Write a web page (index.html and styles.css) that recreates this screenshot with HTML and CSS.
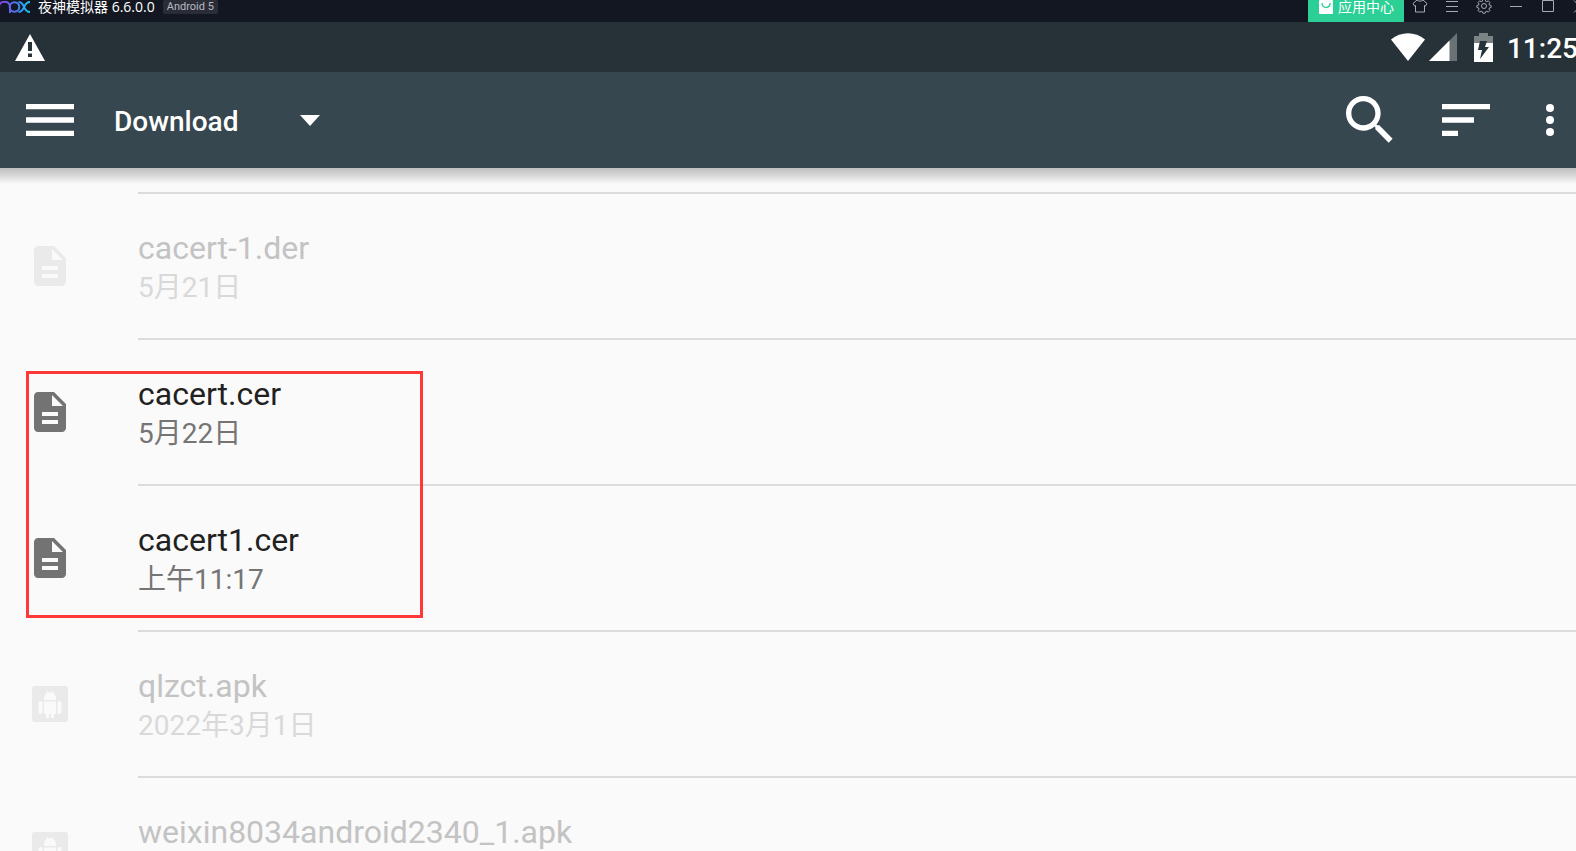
FILE: index.html
```html
<!DOCTYPE html>
<html lang="zh-CN">
<head>
<meta charset="utf-8">
<title>Download</title>
<link rel="stylesheet" href="styles.css">
</head>
<body>
<svg class="defs" aria-hidden="true">
  <symbol id="doc" viewBox="0 0 24 24"><path d="M14 2H6c-1.1 0-2 .9-2 2v16c0 1.100.9 2 2 2h12c1.100 0 2-.9 2-2V8l-6-6zm2 16H8v-2h8v2zm0-4H8v-2h8v2zm-3-5V3.500L18.500 9H13z"/></symbol>
  <symbol id="apk" viewBox="0 0 48 48"><path fill-rule="evenodd" d="M9 6h30a3 3 0 0 1 3 3v30a3 3 0 0 1-3 3H9a3 3 0 0 1-3-3V9a3 3 0 0 1 3-3zM18 20h12v-1c0-3-1-5-3-6l1-1.500-1-.5-1.200 1.500a8 8 0 0 0-3.600 0L21 11l-1 .5 1 1.500c-2 1-3 3-3 6zM18 21.500V34h2v3a1.500 1.500 0 0 0 3 0v-3h2v3a1.500 1.500 0 0 0 3 0v-3h2V21.500zM14.500 21a2 2 0 0 0-2 2v9a2 2 0 0 0 4 0v-9a2 2 0 0 0-2-2zM33.500 21a2 2 0 0 0-2 2v9a2 2 0 0 0 4 0v-9a2 2 0 0 0-2-2z"/></symbol>
</svg>

<header class="titlebar">
  <div class="brand">
    <svg class="logo" viewBox="0 0 30 12" aria-label="nox">
      <defs><linearGradient id="nox" gradientUnits="userSpaceOnUse" x1="0" y1="0" x2="30" y2="0"><stop offset="0" stop-color="#8a3ff0"/><stop offset=".55" stop-color="#4a7cf0"/><stop offset="1" stop-color="#12c8f0"/></linearGradient></defs>
      <g fill="none" stroke="url(#nox)" stroke-width="2"><path d="M-1 12V6C-1-1 10-1 10 6v6"/><circle cx="14.500" cy="6" r="4.800"/><path d="M18.500 1c7 0 4 10 11.500 10M18.500 11c7 0 4-10 11.500-10"/></g>
    </svg>
    <span class="app-name">夜神模拟器 6.6.0.0</span>
    <span class="version">Android 5</span>
  </div>
  <div class="window-tools">
    <button class="app-center">
      <svg viewBox="0 0 14 14" class="bag"><rect width="14" height="14" rx="1" fill="#fff"/><path d="M3 3c0 6 8 6 8 0" fill="none" stroke="#2ccf96" stroke-width="1.400"/></svg>
      应用中心
    </button>
    <button class="tool" aria-label="主题"><svg viewBox="0 0 16 16"><path d="M5 2L1 5.500 2.500 8l1-.5V14h9V7.500l1 .5L15 5.500 11 2C9.500 3.500 6.500 3.500 5 2z"/></svg></button>
    <button class="tool" aria-label="菜单"><svg viewBox="0 0 16 16"><path d="M2 3.500h12M2 8.500h12M2 13.500h12"/></svg></button>
    <button class="tool" aria-label="设置"><svg viewBox="0 0 16 16"><circle cx="8" cy="8" r="2.500"/><path d="M6.800 1.500h2.400l.4 1.700 1.200.5 1.500-.9 1.600 1.700-.9 1.500.4 1.100 1.700.4v2l-1.700.4-.4 1.100.9 1.500-1.600 1.600-1.500-.9-1.200.5-.4 1.500H6.800l-.4-1.500-1.200-.5-1.500.9-1.600-1.600.9-1.500-.4-1.100-1.700-.4v-2l1.700-.4.4-1.100-.9-1.500 1.600-1.700 1.500.9 1.200-.5z"/></svg></button>
    <button class="tool" aria-label="最小化"><svg viewBox="0 0 16 16"><path d="M2 8.500h12"/></svg></button>
    <button class="tool" aria-label="最大化"><svg viewBox="0 0 16 16"><path d="M2.500 2.500h11v11h-11z"/></svg></button>
    <button class="tool" aria-label="关闭"><svg viewBox="0 0 16 16"><path d="M2 2.500l12 12M14 2.500l-12 12"/></svg></button>
  </div>
</header>

<div class="statusbar">
  <svg class="warning" viewBox="0 0 30 27"><path fill="#fff" fill-rule="evenodd" d="M15 0l15 27H0zM13 8v9h4V8zM13 19.500V23h4v-3.500z"/></svg>
  <div class="status-icons">
    <svg class="wifi" viewBox="0 0 34 28"><path fill="#fff" d="M17 28L0 6.500C10-2 24-2 34 6.500z"/></svg>
    <svg class="signal" viewBox="0 0 28 28"><path fill="#6a7275" d="M28 0v28H0z"/><path fill="#fff" d="M20.500 7.500V28H0z"/></svg>
    <svg class="battery" viewBox="0 0 19 29"><path fill="#7c8385" d="M5 0h9v3h5v8H0V3h5z"/><path fill="#fff" d="M0 10h19v19H0z"/><path fill="#273238" d="M6 8h7l-2 6h4L6 26l2-9H4z"/></svg>
    <time class="clock">11:25</time>
  </div>
</div>

<nav class="toolbar">
  <div class="tool-group">
    <button class="action" aria-label="导航"><svg viewBox="0 0 24 24"><path d="M3 18h18v-2H3v2zm0-5h18v-2H3v2zm0-7v2h18V6H3z"/></svg></button>
    <button class="folder"><span class="folder-name">Download</span><svg class="caret" viewBox="0 0 20 11"><path d="M0 0h20L10 11z"/></svg></button>
  </div>
  <div class="tool-group">
    <button class="action" aria-label="搜索"><svg viewBox="0 0 24 24"><path d="M15.500 14h-.79l-.28-.27C15.410 12.590 16 11.110 16 9.500 16 5.910 13.090 3 9.500 3S3 5.910 3 9.500 5.910 16 9.500 16c1.610 0 3.090-.59 4.230-1.570l.27.28v.79l5 4.990L20.490 19l-4.990-5zm-6 0C7.010 14 5 11.990 5 9.500S7.010 5 9.500 5 14 7.010 14 9.500 11.990 14 9.500 14z"/></svg></button>
    <button class="action" aria-label="排序"><svg viewBox="0 0 24 24"><path d="M3 18h6v-2H3v2zM3 6v2h18V6H3zm0 7h12v-2H3v2z"/></svg></button>
    <button class="action more" aria-label="更多"><svg viewBox="0 0 24 24"><circle cx="12" cy="6" r="2"/><circle cx="12" cy="12" r="2"/><circle cx="12" cy="18" r="2"/></svg></button>
  </div>
</nav>

<main class="content">
  <ul class="files">
    <li><button class="file" disabled><svg class="file-icon"><use href="#doc"/></svg><span class="info"><span class="name">cacert-1.der</span><span class="date">5月21日</span></span></button></li>
    <li><button class="file"><svg class="file-icon"><use href="#doc"/></svg><span class="info"><span class="name">cacert.cer</span><span class="date">5月22日</span></span></button></li>
    <li><button class="file"><svg class="file-icon"><use href="#doc"/></svg><span class="info"><span class="name">cacert1.cer</span><span class="date">上午11:17</span></span></button></li>
    <li><button class="file" disabled><svg class="file-icon"><use href="#apk"/></svg><span class="info"><span class="name">qlzct.apk</span><span class="date">2022年3月1日</span></span></button></li>
    <li><button class="file" disabled><svg class="file-icon"><use href="#apk"/></svg><span class="info"><span class="name">weixin8034android2340_1.apk</span></span></button></li>
  </ul>
  <div class="highlight"></div>
</main>
</body>
</html>
```
FILE: styles.css
```css
* { box-sizing: border-box; }

body {
  margin: 0;
  height: 100vh;
  overflow: hidden;
  display: flex;
  flex-direction: column;
  background: #fafafa;
  font-family: Roboto, "Noto Sans CJK SC", sans-serif;
}

button {
  margin: 0;
  padding: 0;
  border: 0;
  background: none;
  color: inherit;
  font: inherit;
  text-align: left;
}

svg { display: block; flex: none; }

.defs { position: absolute; width: 0; height: 0; }

/* Emulator window title bar */
.titlebar {
  flex: none;
  display: flex;
  justify-content: space-between;
  height: 22px;
  overflow: hidden;
  background: #131722;
  color: #fff;
  font-family: "Open Sans", "Noto Sans CJK SC", sans-serif;
  font-size: 14px;
  line-height: 14px;
  white-space: nowrap;
}

.brand {
  display: flex;
  align-items: center;
  gap: 8px;
  padding-bottom: 8px;
}

.logo { width: 30px; height: 12px; }

.version {
  padding: 0 4px;
  border-radius: 2px;
  background: #2a2d38;
  color: #b8bac0;
  font-family: Roboto, sans-serif;
  font-size: 11px;
}

.window-tools {
  display: flex;
  margin-right: -20px;
}

.app-center {
  display: flex;
  align-items: center;
  gap: 5px;
  padding: 0 10px 8px 11px;
  background: #2ccf96;
}

.bag { width: 14px; height: 14px; }

.tool {
  display: flex;
  align-items: center;
  justify-content: center;
  width: 32px;
  padding-bottom: 10px;
}

.tool svg {
  width: 16px;
  height: 16px;
  fill: none;
  stroke: #a9abb2;
}

/* Android status bar */
.statusbar {
  flex: none;
  display: flex;
  align-items: center;
  justify-content: space-between;
  height: 50px;
  padding-left: 15px;
  background: #273238;
  color: #fff;
}

.warning { width: 30px; height: 27px; }

.status-icons {
  display: flex;
  align-items: center;
  margin-right: -2px;
}

.wifi { width: 34px; height: 28px; margin-right: 4px; }
.signal { width: 28px; height: 28px; margin-right: 17px; }
.battery { width: 19px; height: 29px; margin-right: 14px; }

.clock {
  padding-top: 4px;
  font-size: 28px;
  font-weight: 500;
  line-height: 36px;
}

/* Toolbar */
.toolbar {
  flex: none;
  position: relative;
  z-index: 1;
  display: flex;
  justify-content: space-between;
  height: 96px;
  padding: 0 2px 0 18px;
  background: #37474f;
  color: #fff;
}

.toolbar::after {
  content: "";
  position: absolute;
  top: 100%;
  left: 0;
  right: 0;
  height: 16px;
  background: linear-gradient(rgba(0, 0, 0, .24), rgba(0, 0, 0, .14) 45%, rgba(0, 0, 0, 0));
}

.tool-group {
  display: flex;
  align-items: center;
  gap: 32px;
}

.action svg {
  width: 64px;
  height: 64px;
  fill: #fff;
}

.more { margin-left: -4px; }

.more svg { width: 48px; height: 48px; }

.folder {
  display: flex;
  align-items: center;
  gap: 62px;
}

.folder-name {
  padding-top: 4px;
  font-size: 28px;
  font-weight: 500;
  line-height: 36px;
}

.caret { width: 20px; height: 11px; fill: #fff; }

/* File list */
.content {
  flex: 1;
  position: relative;
  min-height: 0;
  overflow: hidden;
}

.files {
  margin: 0;
  padding: 24px 0 0;
  list-style: none;
}

.file {
  display: flex;
  align-items: center;
  gap: 64px;
  width: 100%;
  padding-left: 26px;
  color: #212121;
}

.file-icon {
  width: 48px;
  height: 48px;
  margin-top: 2px;
  fill: #737373;
}

.info {
  flex: 1;
  display: flex;
  flex-direction: column;
  height: 146px;
  padding-top: 35px;
  border-top: 2px solid #dcdcdc;
}

.name { font-size: 32px; line-height: 38px; }

.date { color: #757575; font-size: 28px; line-height: 42px; }

.file:disabled { color: #c3c3c3; }
.file:disabled .date { color: #d9d9d9; }
.file:disabled .file-icon { fill: #eaeaea; }

.highlight {
  position: absolute;
  top: 203px;
  left: 26px;
  width: 397px;
  height: 247px;
  border: 3px solid #ff3838;
  pointer-events: none;
}
```
